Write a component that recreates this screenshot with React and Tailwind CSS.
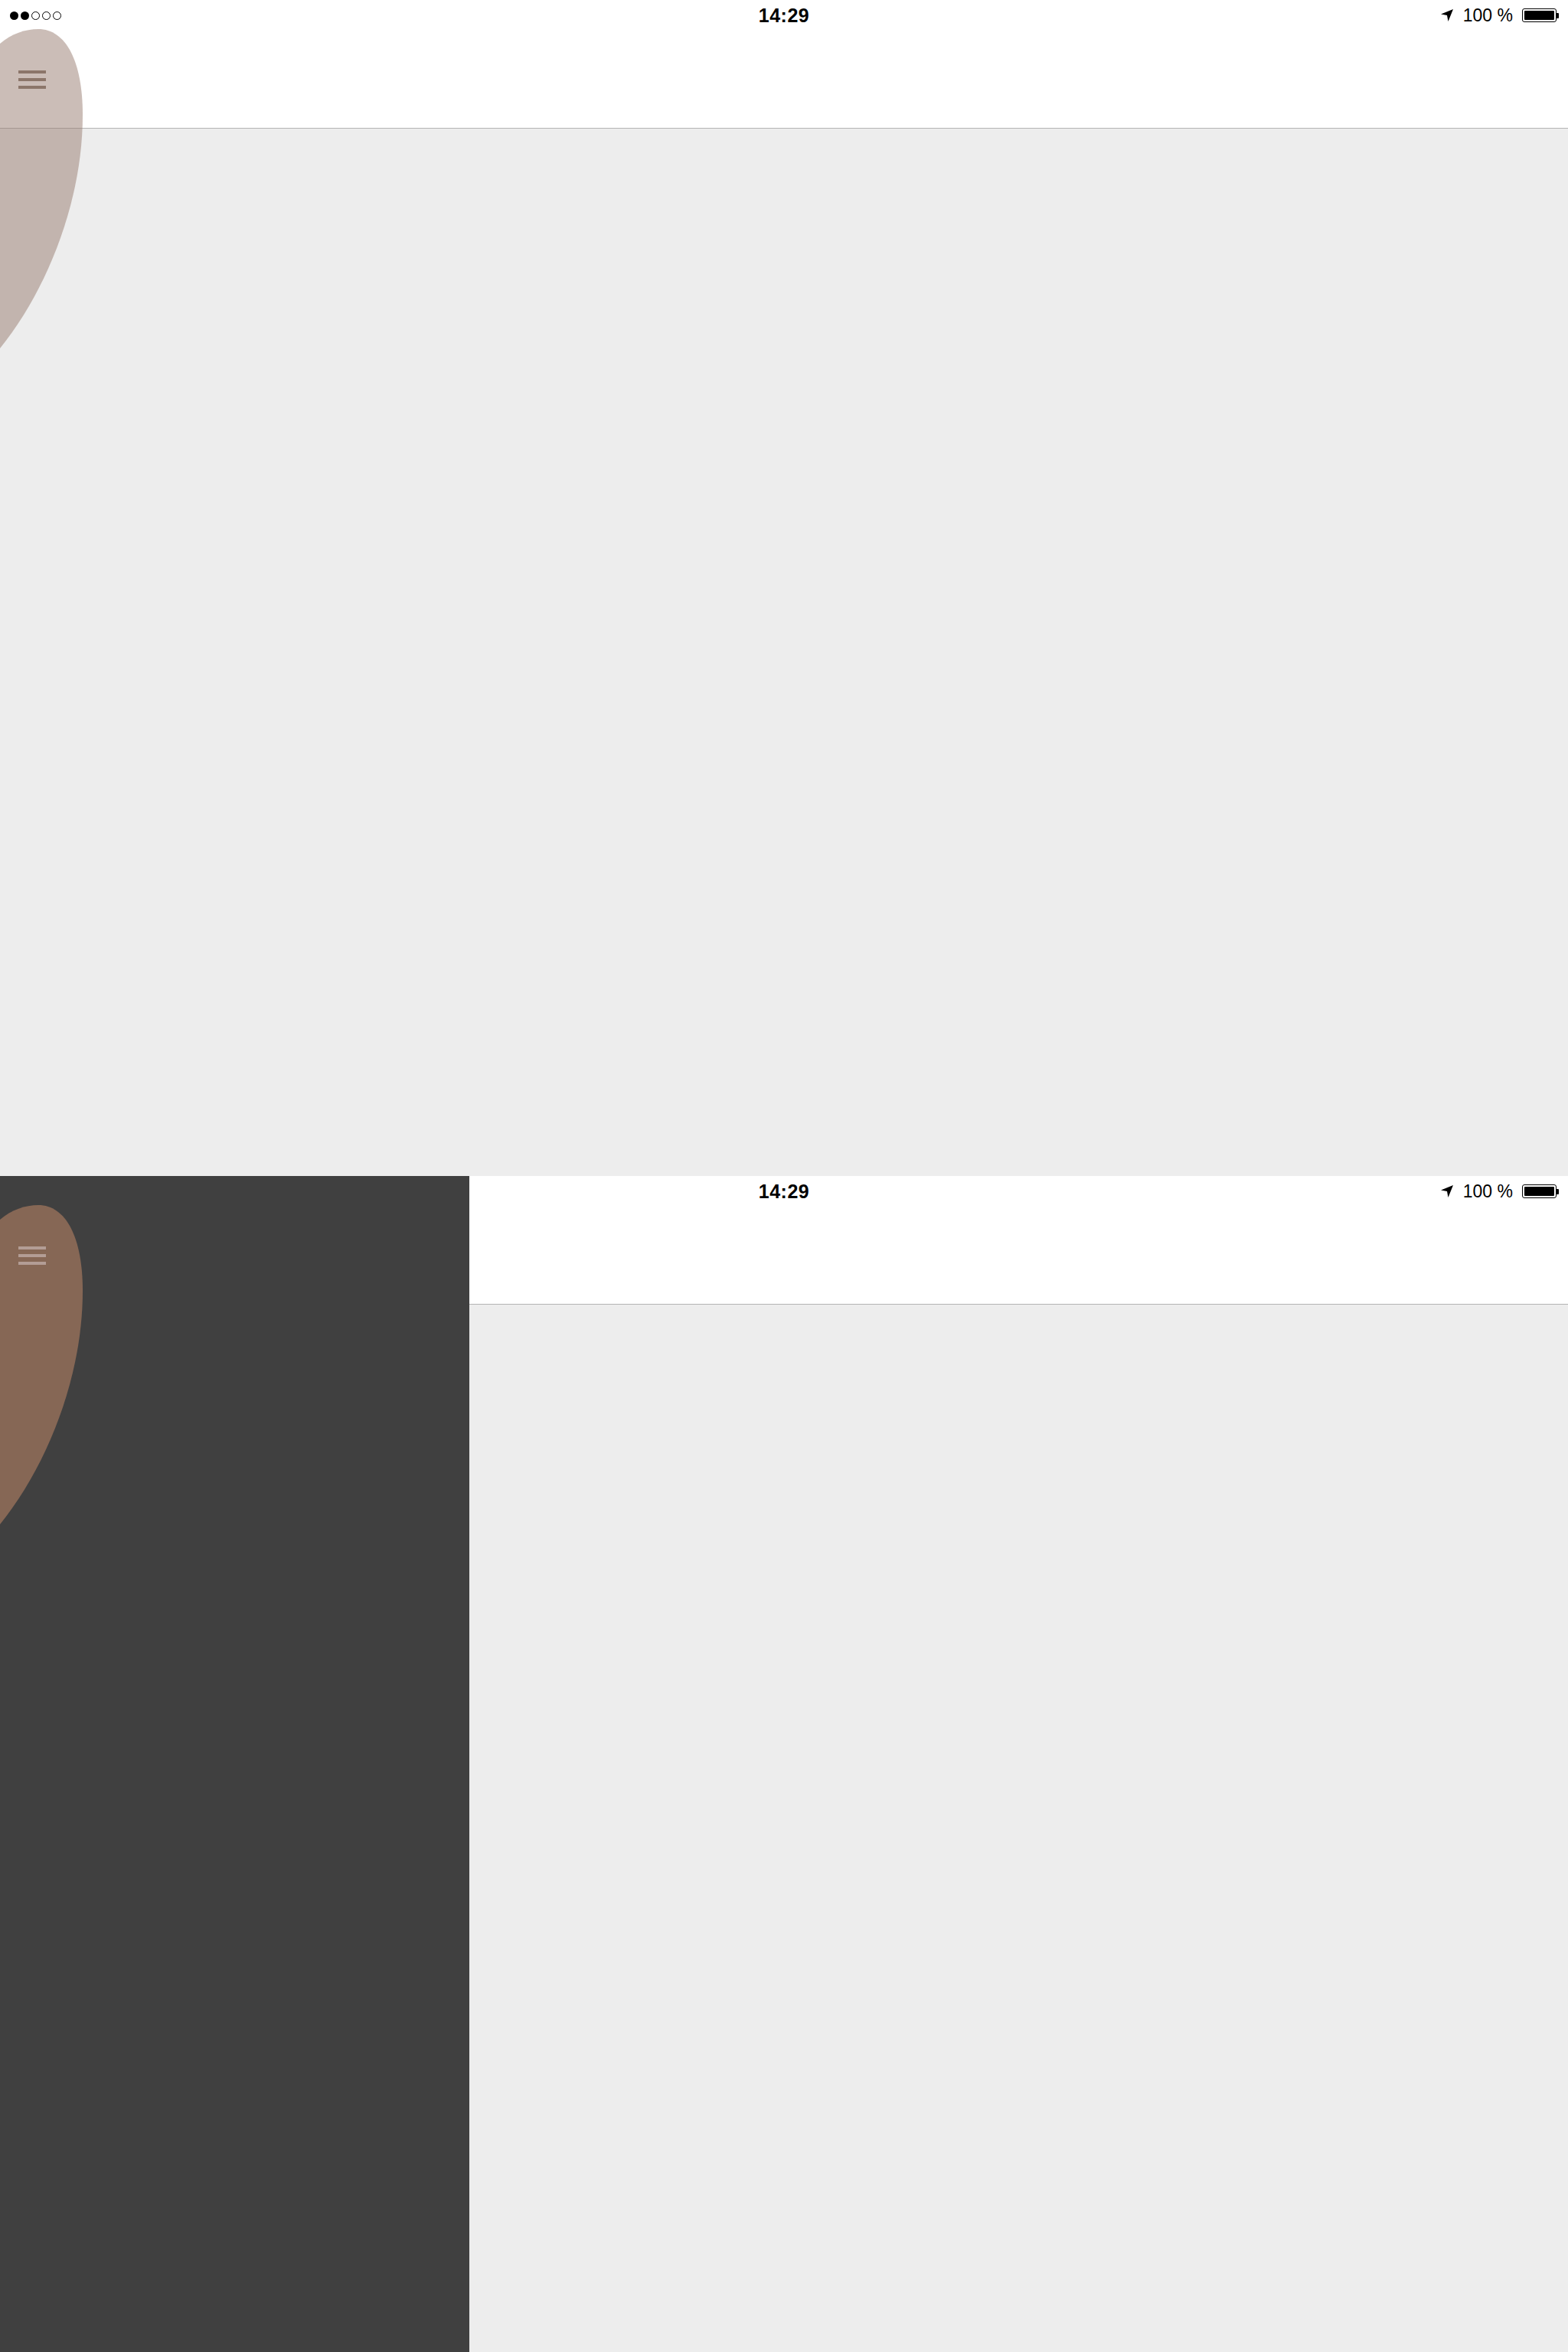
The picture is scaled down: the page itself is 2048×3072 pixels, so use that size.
const font = { fontFamily: '"Liberation Sans", Arial, sans-serif' };

function SignalDots() {
  return (
    <div className="flex items-center gap-[3px]">
      {[0, 1, 2, 3, 4].map((i) => (
        <span
          key={i}
          className={
            i < 2
              ? 'block w-[11px] h-[11px] rounded-full bg-black'
              : 'block w-[11px] h-[11px] rounded-full border border-black'
          }
        />
      ))}
    </div>
  );
}

function StatusBar({ dots = true }) {
  return (
    <div className="absolute top-0 left-0 right-0 h-[40px] flex items-center text-black" style={font}>
      <div className="w-[200px] pl-[13px] flex items-center">{dots && <SignalDots />}</div>
      <div className="flex-1 flex justify-center">
        <span className="text-[25px] font-bold leading-none tracking-[0.5px]">14:29</span>
      </div>
      <div className="w-[200px] flex items-center justify-end pr-[12px] gap-[12px]">
        <svg width="18" height="18" viewBox="0 0 18 18">
          <path d="M17 1 L1 7.5 L9 9 L10.5 17 Z" fill="black" />
        </svg>
        <span className="text-[23px] leading-none">100 %</span>
        <div className="flex items-center">
          <div className="w-[45px] h-[18px] rounded-[3px] border-[1.5px] border-black p-[2px]">
            <div className="w-full h-full rounded-[1px] bg-black" />
          </div>
          <div className="w-[3px] h-[7px] bg-black rounded-r-[1px]" />
        </div>
      </div>
    </div>
  );
}

function Blob({ fill, barColor }) {
  return (
    <div className="absolute top-0 left-0 w-[120px] h-[470px]">
      <svg width="120" height="470" viewBox="0 0 120 470" className="absolute top-0 left-0">
        <path
          d="M0 57 C15 44 33 38 50 38 C86 38 108 80 108 150 C108 262 62 378 0 455 Z"
          fill={fill}
        />
      </svg>
      <div className="absolute left-[24px] top-[92px] w-[36px] flex flex-col gap-[6px]">
        <span className="block h-[4px]" style={{ background: barColor }} />
        <span className="block h-[4px]" style={{ background: barColor }} />
        <span className="block h-[4px]" style={{ background: barColor }} />
      </div>
    </div>
  );
}

export default function App() {
  return (
    <div className="w-[2048px]">
      <section className="relative h-[1536px] flex flex-col bg-[#ededed] overflow-hidden">
        <header className="h-[168px] bg-white border-b border-[#b4b4b4]" />
        <div className="flex-1" />
        <StatusBar />
        <Blob fill="rgba(151,123,111,0.5)" barColor="#8c766a" />
      </section>

      <section className="relative h-[1536px] flex overflow-hidden">
        <aside className="w-[613px] bg-[#404040]" />
        <main className="flex-1 flex flex-col bg-[#ededed]">
          <header className="h-[168px] bg-white border-b border-[#b4b4b4]" />
          <div className="flex-1" />
        </main>
        <StatusBar dots={false} />
        <Blob fill="#866755" barColor="#b39d95" />
      </section>
    </div>
  );
}
